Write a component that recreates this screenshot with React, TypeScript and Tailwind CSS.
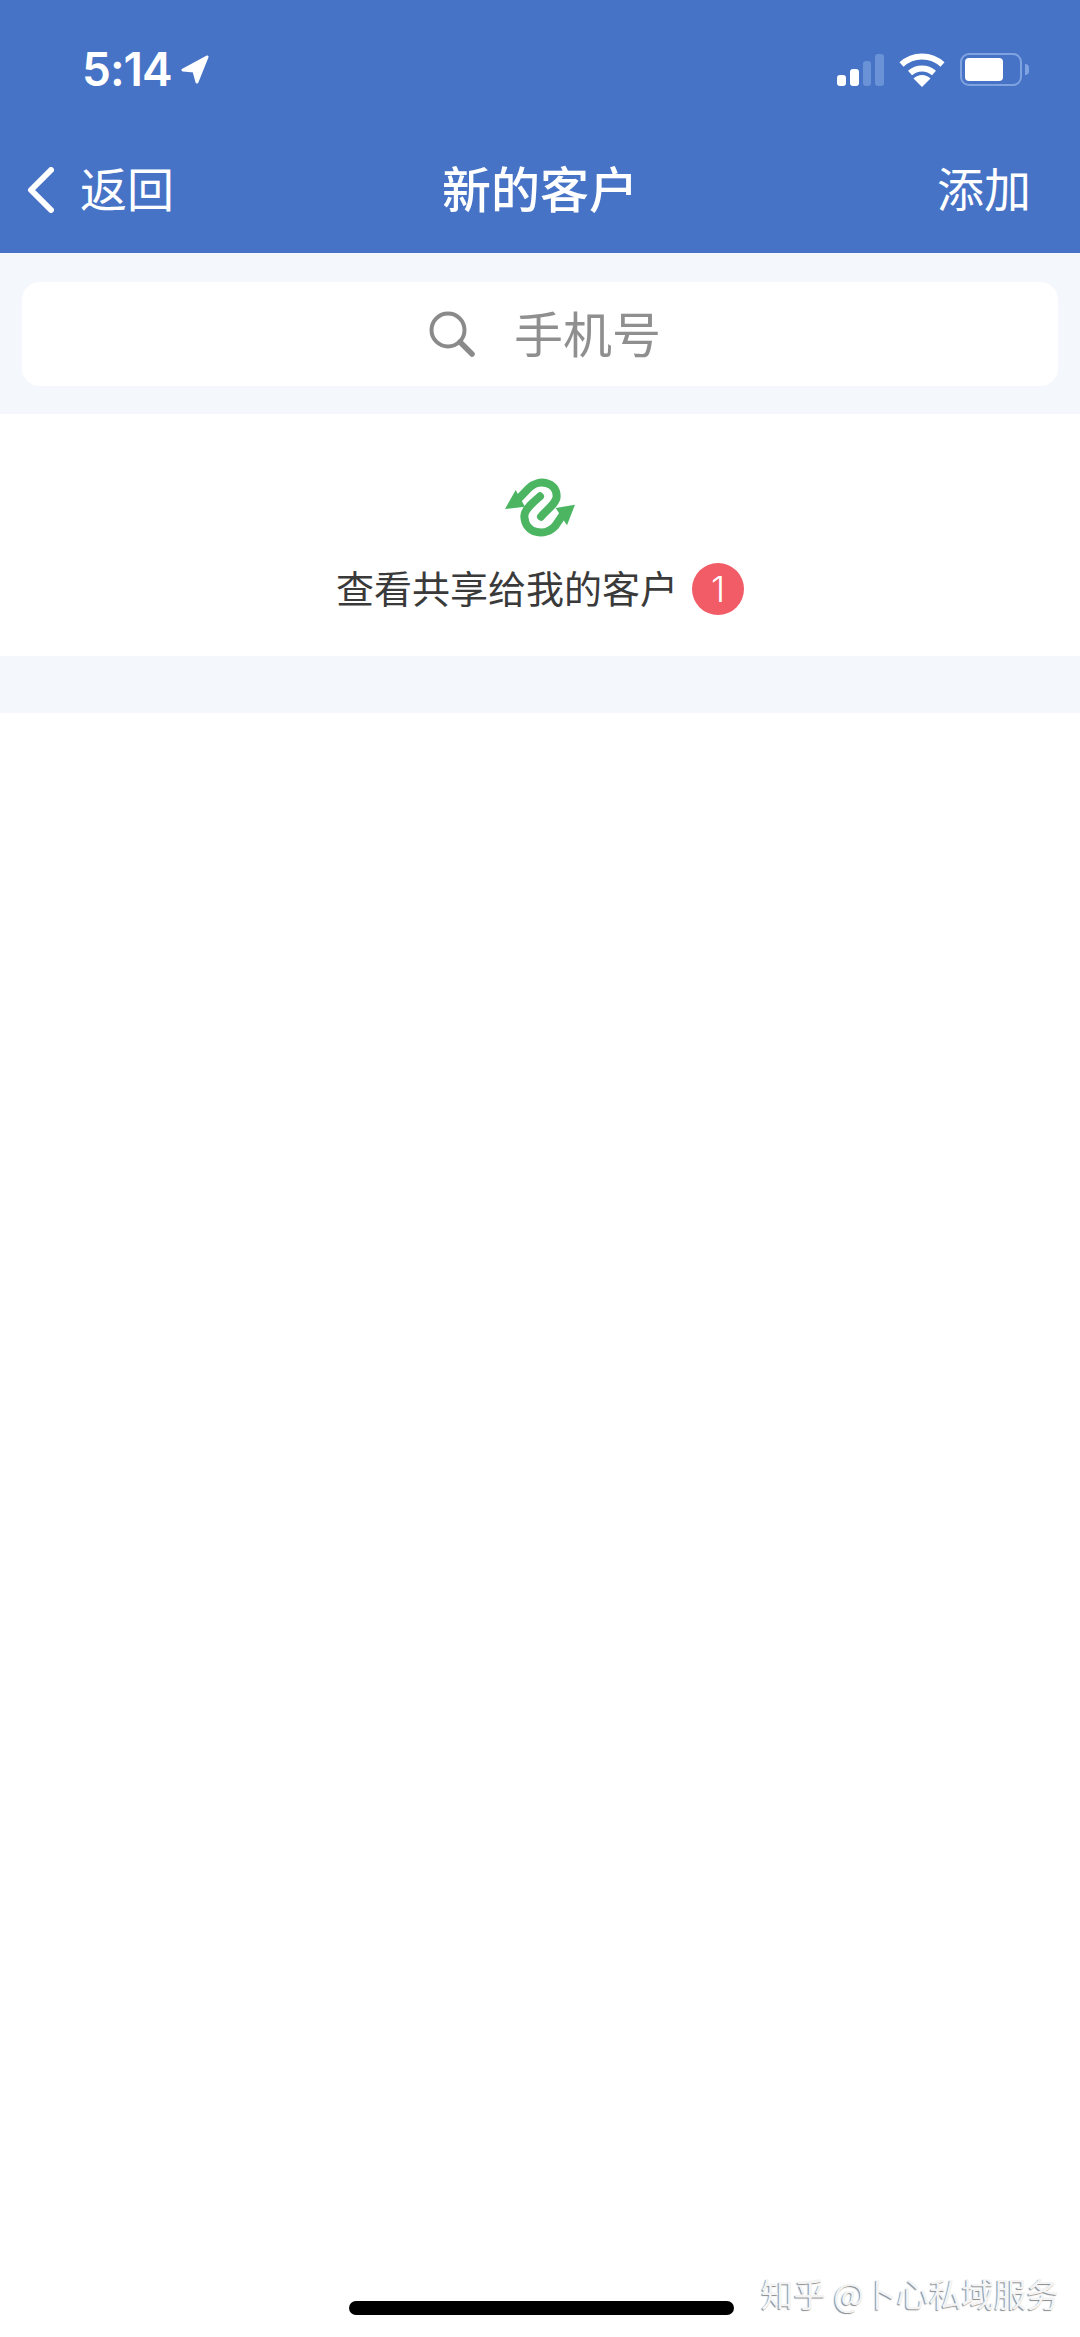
const cjk = "font-['Noto_Sans_CJK_SC','Noto_Sans',sans-serif]";

function Signal() {
  return (
    <div className="flex items-end gap-[4px] h-[33px]">
      <div className="w-[9px] h-[11px] rounded-[3px] bg-white" />
      <div className="w-[9px] h-[17px] rounded-[3px] bg-white" />
      <div className="w-[8px] h-[25px] rounded-[3px] bg-[#6a92d6]" />
      <div className="w-[9px] h-[32px] rounded-[3px] bg-[#6a92d6]" />
    </div>
  );
}

function Wifi() {
  return (
    <svg width="46" height="35" viewBox="0 0 46 35" fill="none">
      <path d="M2.5 12.5 A 30 30 0 0 1 43.5 12.5" stroke="#fff" strokeWidth="6" />
      <path d="M11 21 A 18 18 0 0 1 35 21" stroke="#fff" strokeWidth="6" />
      <path d="M14.5 26.5 A 12 12 0 0 1 31.5 26.5 L 23 35 Z" fill="#fff" />
    </svg>
  );
}

function Battery() {
  return (
    <div className="flex items-center gap-[3px]">
      <div className="w-[62px] h-[33px] rounded-[9px] border-2 border-[#7fa3e0] p-[3px]">
        <div className="w-[38px] h-full rounded-[4px] bg-white" />
      </div>
      <div className="w-[4px] h-[11px] rounded-r-full bg-[#7fa3e0]" />
    </div>
  );
}

function ShareIcon() {
  return (
    <svg width="70" height="60" viewBox="0 0 210 180" fill="none">
      <path
        d="M35 68 L72 30 C100 2 155 10 155 55 C155 76 125 95 108 116"
        stroke="#4cb562"
        strokeWidth="24"
        strokeLinecap="round"
      />
      <path
        d="M175 108 L152 142 C122 178 60 168 58 115 C57 95 85 72 105 55"
        stroke="#4cb562"
        strokeWidth="24"
        strokeLinecap="round"
      />
      <polygon points="0,93 32,36 60,86" fill="#4cb562" />
      <polygon points="210,80 152,90 186,142" fill="#4cb562" />
    </svg>
  );
}

export default function App() {
  return (
    <div className={`relative flex flex-col h-[2337px] w-[1080px] bg-white overflow-hidden ${cjk}`}>
      <header className="h-[253px] bg-[#4673c6] text-white flex flex-col">
        <div className="mt-[52px] h-[34px] pl-[82px] pr-[51px] flex items-center justify-between">
          <div className="flex items-center gap-[9px]">
            <span className="font-['Inter',sans-serif] text-[46px] leading-[34px] font-semibold tracking-[-1px]">5:14</span>
            <svg width="28" height="29" viewBox="0 0 28 29" fill="#fff" stroke="#fff" strokeWidth="3" strokeLinejoin="round">
              <polygon points="26,2 2,15 13,16 16,27" />
            </svg>
          </div>
          <div className="flex items-center gap-[15px]">
            <Signal />
            <Wifi />
            <Battery />
          </div>
        </div>
        <div className="mt-[78px] h-[46px] pl-[27px] pr-[49px] flex items-center">
          <svg className="mt-[6px]" width="27" height="46" viewBox="0 0 27 46" fill="none" stroke="#fff" strokeWidth="6" strokeLinecap="round" strokeLinejoin="round">
            <polyline points="24,3 4,23 24,43" />
          </svg>
          <span className="ml-[26px] text-[47px] leading-[46px]">返回</span>
          <span className="ml-[268px] text-[49px] leading-[46px] font-medium">新的客户</span>
          <span className="ml-auto text-[47px] leading-[46px]">添加</span>
        </div>
      </header>

      <section className="bg-[#f4f7fb] pt-[29px] pb-[28px] px-[22px]">
        <div className="h-[104px] rounded-[18px] bg-white flex items-center pl-[407px] gap-[39px]">
          <svg width="46" height="46" viewBox="0 0 46 46" fill="none" stroke="#8a8a8a">
            <circle cx="19" cy="19" r="16.5" strokeWidth="4" />
            <line x1="31" y1="31" x2="43" y2="43" strokeWidth="5.5" strokeLinecap="round" />
          </svg>
          <span className="-mt-[5px] text-[49px] leading-[48px] text-[#8f8f8f]">手机号</span>
        </div>
      </section>

      <section className="h-[242px] bg-white pt-[64px] flex flex-col items-center">
        <ShareIcon />
        <div className="mt-[25px] flex items-center gap-[14px]">
          <span className="-mt-[5px] text-[38px] leading-[52px] text-[#3a3a3a]">查看共享给我的客户</span>
          <span className="w-[52px] h-[52px] rounded-full bg-[#f25c66] text-white text-[36px] leading-[52px] text-center font-['Inter',sans-serif] font-light">1</span>
        </div>
      </section>

      <div className="h-[57px] bg-[#f4f7fb]" />

      <div className="flex-1 bg-white flex flex-col items-center justify-end pb-[22px]">
        <div className="w-[385px] h-[14px] rounded-full bg-black ml-[2px]" />
      </div>

      <div className="absolute left-[761px] top-[2276px] text-[32.5px] leading-[34px] whitespace-nowrap text-[#f4f4f4] [text-shadow:-1px_1px_1px_#8a8a8a]">
        知乎 @卜心私域服务
      </div>
    </div>
  );
}
